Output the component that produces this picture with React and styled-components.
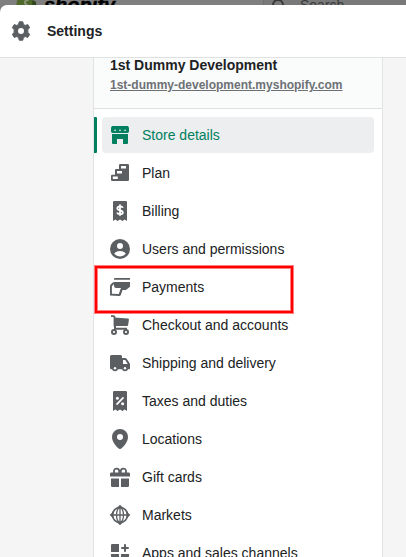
import React from "react";
import styled, { createGlobalStyle } from "styled-components";

const GlobalStyle = createGlobalStyle`
  * { box-sizing: border-box; }
  body {
    margin: 0;
    overflow: hidden;
    background: #7f7f7f;
    font-family: "Liberation Sans", Arial, sans-serif;
    color: #202223;
  }
`;

const Page = styled.div`
  display: flex;
  flex-direction: column;
  width: 406px;
  height: 557px;
  overflow: hidden;
`;

const TopBar = styled.div`
  display: flex;
  height: 5px;
  flex: none;
  overflow: hidden;
  background: #7f7f7f;
`;

const Brand = styled.div`
  display: flex;
  flex: none;
  width: 263px;
  padding-left: 15px;
`;

const LogoBag = styled.svg`
  display: block;
  flex: none;
  width: 24px;
  height: 7px;
`;

const Wordmark = styled.div`
  height: 24px;
  margin: -7px 0 0 5px;
  font-size: 20px;
  line-height: 24px;
  font-weight: 700;
  font-style: italic;
  color: #000;
  -webkit-text-stroke: 0.4px #000;
`;

const SearchField = styled.div`
  display: flex;
  flex: 1;
  height: 22px;
  margin-top: -6px;
  padding-left: 7px;
  border-left: 1px solid #707070;
  background: #797979;
  color: #37393b;
  font-size: 14px;
  line-height: 22px;

  svg {
    flex: none;
    width: 16px;
    height: 16px;
    margin: 3px 13px 0 0;
  }
`;

const Dialog = styled.main`
  display: flex;
  flex: 1;
  min-height: 0;
  flex-direction: column;
  overflow: hidden;
  border-top-left-radius: 7px;
  background: #fff;
`;

const DialogHeader = styled.header`
  display: flex;
  align-items: center;
  flex: none;
  gap: 16px;
  height: 53px;
  padding: 0 11px;
  border-bottom: 1px solid #dfe1e2;
`;

const Title = styled.h1`
  margin: 0;
  font-size: 14px;
  line-height: 20px;
`;

const DialogBody = styled.div`
  flex: 1;
  min-height: 0;
  padding-left: 93px;
  overflow: hidden;
  background: #f5f5f5;
`;

const Panel = styled.section`
  width: 290px;
  height: 510px;
  border: solid #e1e3e5;
  border-width: 0 1px;
  background: #fff;
`;

const StoreInfo = styled.div`
  display: flex;
  flex-direction: column;
  align-items: flex-start;
  height: 51px;
  padding: 0 16px;
  border-bottom: 1px solid #dfe2e3;
  background: #fafbfb;
`;

const StoreName = styled.strong`
  margin-top: -3px;
  font-size: 14px;
  line-height: 20px;
`;

const StoreLink = styled.a`
  font-size: 12px;
  line-height: 20px;
  font-weight: 700;
  color: #6d7175;
  text-decoration: underline;
`;

const Nav = styled.nav`
  display: flex;
  flex-direction: column;
  gap: 2px;
  padding-top: 8px;
`;

const NavItem = styled.div`
  display: flex;
  flex: none;
  height: 36px;
  padding-right: 8px;
  color: ${({ $active }) => ($active ? "#008060" : "#202223")};
  --icon: ${({ $active }) => ($active ? "#008060" : "#5c5f62")};
  --surface: ${({ $active }) => ($active ? "#edeeef" : "#fff")};

  &::before {
    content: "";
    width: 3px;
    margin-right: 5px;
    border-radius: 0 1px 1px 0;
    background: ${({ $active }) => ($active ? "#008060" : "transparent")};
  }
`;

const NavLink = styled.div`
  display: flex;
  flex: 1;
  align-items: center;
  gap: 12px;
  padding-left: 8px;
  border-radius: 4px;
  background: var(--surface);
  font-size: 14px;
  line-height: 20px;
  white-space: nowrap;
`;

const Glyph = styled.svg`
  display: block;
  flex: none;
  width: 20px;
  height: 20px;
  fill: var(--icon, #5c5f62);
  overflow: visible;

  .cut { fill: var(--surface, #fff); }
  .line { fill: none; stroke: var(--icon, #5c5f62); }
  .cutLine { fill: none; stroke: var(--surface, #fff); }
`;

const Highlight = styled.div`
  position: absolute;
  left: 95px;
  top: 266px;
  width: 198px;
  height: 47px;
  border: 2px solid #f00;
  box-shadow: 0 0 0 1px rgba(255, 0, 0, 0.5), inset 0 0 0 1px rgba(255, 0, 0, 0.5);
  pointer-events: none;
`;

const receipt = "M3 1.2Q3 0 4.2 0h11.6Q17 0 17 1.2V20l-2.3-1.5L12.4 20 10 18.5 7.6 20l-2.3-1.5L3 20Z";

const icons = {
  store: (
    <>
      <path d="M2.4 1h15.2Q18.5 1 19 3v3.5q0 1.4-1.5 1.4h-15Q1 7.9 1 6.5V3q.5-2 1.4-2ZM2 9h16v9q0 1-1 1h-4v-5H7v5H3q-1 0-1-1Z" />
      <path className="cut" d="M4 4.8h2.1q-.2 1.4-1 1.4T4 4.8ZM9 4.8h2q-.2 1.4-1 1.4T9 4.8ZM14 4.8h2.1q-.3 1.4-1.1 1.4T14 4.8Z" />
    </>
  ),
  plan: (
    <>
      <path d="M1 13q0-1.2 1.2-1.2H5V7.2Q5 6 6.2 6H9V2.2Q9 1 10.2 1h7.6Q19 1 19 2.2v14.6q0 1.2-1.2 1.2H2.2Q1 18 1 16.8Z" />
      <path className="cut" d="M11 3h5v2.6h-5zM7 8h5v2.6H7zM2.8 13.4h5v2.6h-5z" />
    </>
  ),
  billing: (
    <>
      <path d={receipt} />
      <path className="cutLine" strokeWidth="1.8" d="M12.8 6.9Q12.4 5.3 10 5.3T7.3 7.2Q7.3 8.7 10 9.3t2.8 2.1q0 1.8-2.8 1.8-2.4 0-2.9-1.7M10 3.5v11.3" />
    </>
  ),
  users: (
    <>
      <circle cx="10" cy="10" r="10" />
      <circle className="cut" cx="10" cy="7" r="3" />
      <path className="cut" d="M4.2 14.8C5.4 12.9 7.3 12 10 12s4.6.9 5.8 2.8A7.6 7.6 0 0 1 10 17.4a7.6 7.6 0 0 1-5.8-2.6Z" />
    </>
  ),
  payments: (
    <>
      <path d="M4.9 1H20v1.8H4V2Q4 1 4.9 1ZM5 5h15v4.8l-3.4 2.6q-.7.5-1.6.5h-2.5l-1.6 4.8q-.4 1.3-1.8 1.3L0 18.5V9.2Q0 8 .8 7.2l1.6-1.5Q3.2 5 5 5Z" />
      <path className="cut" d="M4 7 1.9 9.2v7.6l6.9.3 1.7-5 .7-1.1H6.2Q4 11 4 8.8Z" />
    </>
  ),
  cart: (
    <>
      <path d="M4 2.6 18 3.6q1 .1.9 1.1l-.8 5.5q-.1.8-1 .8H4Z" />
      <path className="line" strokeWidth="1.8" strokeLinejoin="round" d="M1 1.1h2.7q.8 0 .8 1v9.2" />
      <path d="M4 10h2v2.8h11v1.9H4z" />
      <circle cx="4" cy="17" r="3" /><circle cx="16" cy="17" r="3" />
      <circle className="cut" cx="4" cy="17" r="1.1" /><circle className="cut" cx="16" cy="17" r="1.1" />
    </>
  ),
  truck: (
    <>
      <path d="M1.5 2h9.2Q12 2 12 3.5V5h3.2q1 0 1.6 1l3 4.4q.2.4.2.8v4.3q0 .8-1 .8H1.3q-1.3 0-1.3-1.3V3.5Q0 2 1.5 2Z" />
      <path className="cut" d="M13 7h2.2l2.5 4H13Z" />
      <circle cx="5" cy="15.2" r="3" /><circle cx="15" cy="15.2" r="3" />
      <circle className="cut" cx="5" cy="15.3" r="1.2" /><circle className="cut" cx="15" cy="15.3" r="1.2" />
    </>
  ),
  taxes: (
    <>
      <path d={receipt} />
      <path className="cutLine" strokeWidth="1.7" strokeLinecap="round" d="m13 6.8-6 6.4" />
      <circle className="cut" cx="7.4" cy="7.3" r="1.5" /><circle className="cut" cx="12.6" cy="12.7" r="1.5" />
    </>
  ),
  location: (
    <>
      <path d="M10 0a8 8 0 0 0-8 8c0 5.4 5.3 10.8 7.2 11.7q.8.5 1.6 0C12.7 18.8 18 13.4 18 8a8 8 0 0 0-8-8Z" />
      <circle className="cut" cx="10" cy="8" r="3" />
    </>
  ),
  gift: (
    <>
      <path d="M1.3 5.5h17.4Q20 5.5 20 6.8V9.6H0V6.8Q0 5.5 1.3 5.5ZM1 11.5h8V20H2.3Q1 20 1 18.7ZM11 11.5h8v7.2q0 1.3-1.3 1.3H11Z" />
      <path className="line" strokeWidth="1.8" d="M4 6.5V4.1C4 .6 9.3.8 9.3 4.4v2M10.7 6.5v-2C10.7.8 16 .6 16 4.1v2.4" />
    </>
  ),
  markets: (
    <>
      <circle className="line" cx="10" cy="10" r="7.5" strokeWidth="1.7" />
      <ellipse className="line" cx="10" cy="10" rx="3.5" ry="7.3" strokeWidth="1.3" />
      <path className="line" strokeWidth="1.3" d="M1 10h18M10 1v18" />
      <path d="m10-.3 3.6 3.6H6.4ZM10 20.3l3.6-3.6H6.4ZM-.3 10l3.6-3.6v7.2ZM20.3 10l-3.6-3.6v7.2Z" />
    </>
  ),
  apps: (
    <>
      <path d="M2.1 1H9v8H1V2.1Q1 1 2.1 1ZM1 11h8v8H2.1Q1 19 1 17.9ZM11 11h8v6.9q0 1.1-1.1 1.1H11Z" />
      <path className="line" strokeWidth="2" strokeLinecap="round" d="M15 2v6M12 5h6" />
    </>
  ),
  gear: (
    <>
      <path strokeLinejoin="round" stroke="#5c5f62" strokeWidth="1" d="M8.2.8h3.6l.6 2.6q1 .4 1.9 1l2.5-.8 1.9 3.2-1.9 1.8q.2 1.4 0 2.8l1.9 1.8-1.9 3.2-2.5-.8q-.9.7-1.9 1l-.6 2.6H8.2l-.6-2.6q-1-.4-1.9-1l-2.5.8-1.9-3.2 1.9-1.8Q3 10 3.2 8.6L1.3 6.8l1.9-3.2 2.5.8q.9-.7 1.9-1Z" />
      <circle className="cut" cx="10" cy="10" r="3" />
    </>
  ),
};

function Icon({ name }) {
  return <Glyph viewBox="0 0 20 20" aria-hidden="true">{icons[name]}</Glyph>;
}

const items = [
  ["store", "Store details"],
  ["plan", "Plan"],
  ["billing", "Billing"],
  ["users", "Users and permissions"],
  ["payments", "Payments"],
  ["cart", "Checkout and accounts"],
  ["truck", "Shipping and delivery"],
  ["taxes", "Taxes and duties"],
  ["location", "Locations"],
  ["gift", "Gift cards"],
  ["markets", "Markets"],
  ["apps", "Apps and sales channels"],
];

export default function App() {
  return (
    <Page>
      <GlobalStyle />
      <TopBar>
        <Brand>
          <LogoBag viewBox="0 0 24 7">
            <path fill="#4f682b" d="M1 7 2.2 0h15L18 7Z" />
            <path fill="#30481c" d="m17.2 0 3.3 1.2L22 7h-5Z" />
            <path fill="none" stroke="#8a9479" strokeWidth="2" d="M13.5 0Q9 .5 10.2 3.5L12.5 6" />
          </LogoBag>
          <Wordmark>shopify</Wordmark>
        </Brand>
        <SearchField>
          <svg viewBox="0 0 16 16" fill="none" stroke="#37393b" strokeWidth="2">
            <circle cx="7" cy="8" r="5" />
            <path d="m11 12 4 4" />
          </svg>
          Search
        </SearchField>
      </TopBar>
      <Dialog>
        <DialogHeader>
          <Icon name="gear" />
          <Title>Settings</Title>
        </DialogHeader>
        <DialogBody>
          <Panel>
            <StoreInfo>
              <StoreName>1st Dummy Development</StoreName>
              <StoreLink>1st-dummy-development.myshopify.com</StoreLink>
            </StoreInfo>
            <Nav>
              {items.map(([icon, label], index) => (
                <NavItem key={icon} $active={index === 0}>
                  <NavLink>
                    <Icon name={icon} />
                    {label}
                  </NavLink>
                </NavItem>
              ))}
            </Nav>
          </Panel>
        </DialogBody>
      </Dialog>
      <Highlight />
    </Page>
  );
}
